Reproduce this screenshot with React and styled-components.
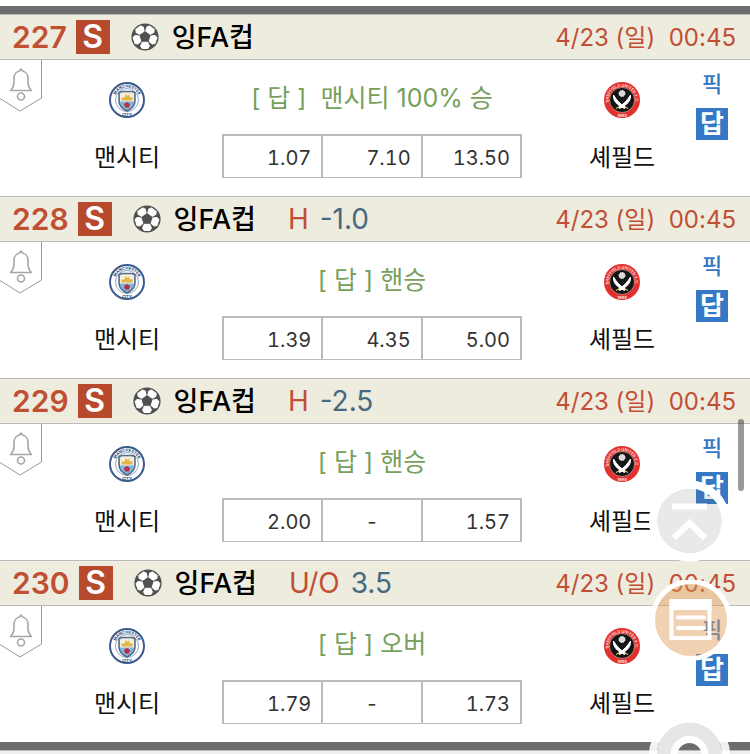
import React, { useId } from "react";
import styled, { createGlobalStyle } from "styled-components";

const GlobalStyle = createGlobalStyle`
    * {
        box-sizing: border-box;
    }
    body {
        margin: 0;
        background-color: #eeeeee;
        font-family: Inter, "Noto Sans CJK KR", sans-serif;
        color: #111111;
    }
`;

const Page = styled.main`
    padding-top: 6px;
    background-color: white;
`;

const List = styled.section`
    border-top: 8px solid #6d6d6d;
    border-bottom: 8px solid #6d6d6d;
`;

const Footer = styled.footer`
    height: 4px;
    border-top: 1px solid #bbbbbb;
    background-color: #eeeeee;
`;

const GameHeader = styled.header`
    display: flex;
    align-items: center;
    height: 46px;
    padding: 0 14px 0 12px;
    border-top: 1px solid #bbbbbb;
    border-bottom: 1px solid #bbbbbb;
    background-color: #eeecdf;
    white-space: nowrap;
`;

const GameNumber = styled.span`
    font-size: 30px;
    font-weight: 600;
    color: #c14f33;
`;

const Badge = styled.span`
    width: 34px;
    height: 34px;
    margin-left: 9px;
    background-color: #b7492c;
    color: white;
    font-size: 32px;
    font-weight: 600;
    line-height: 34px;
    text-align: center;
`;

const Ball = styled.svg`
    width: 28px;
    height: 28px;
    margin-left: 21px;
`;

const League = styled.h2`
    margin: 0 0 0 13px;
    padding-top: 2px;
    font-size: 27px;
    font-weight: 500;
    line-height: 40px;
    color: black;
`;

const Handicap = styled.span`
    display: flex;
    gap: 11px;
    margin-left: 32px;
    font-size: 28px;
    color: #47697f;
`;

const Kind = styled.span`
    color: #c14f33;
`;

const When = styled.time`
    margin-left: auto;
    padding-top: 2px;
    font-size: 24px;
    line-height: 40px;
    color: #c14f33;
    white-space: pre;
`;

const GameBody = styled.div`
    display: grid;
    grid-template-columns: 62px 130px 1fr 140px 58px;
    min-height: 136px;
`;

const AlarmButton = styled.button`
    width: 43px;
    height: 53px;
    padding: 0;
    border: none;
    background: none;
    cursor: pointer;
`;

const Team = styled.div`
    display: flex;
    flex-direction: column;
    align-items: center;
    gap: 22px;
    padding-top: 22px;
`;

const TeamName = styled.span`
    font-size: 24px;
    line-height: 36px;
`;

const Middle = styled.div`
    display: flex;
    flex-direction: column;
    align-items: center;
    gap: 18px;
    padding-top: 20px;
`;

const Answer = styled.p`
    margin: 0;
    font-size: 25px;
    line-height: 36px;
    color: #76a05c;
    white-space: pre;
`;

const Odds = styled.table`
    width: 300px;
    height: 44px;
    border-collapse: collapse;
    table-layout: fixed;
`;

const Odd = styled.td`
    padding: 2px 10px 0;
    border: 2px solid #bbbbbb;
    border-bottom-width: 1px;
    font-size: 20px;
    font-variant-numeric: tabular-nums;
    color: #333333;
    text-align: ${props => props.$empty ? "center" : "right"};
`;

const Picks = styled.div`
    display: flex;
    flex-direction: column;
    align-items: center;
    gap: 12px;
    width: 40px;
    padding-top: 12px;
`;

const PickButton = styled.button`
    padding: 0;
    border: none;
    background: none;
    font-family: inherit;
    font-size: 22px;
    font-weight: 500;
    line-height: 24px;
    color: #3478c6;
    cursor: pointer;
`;

const AnswerButton = styled(PickButton)`
    width: 32px;
    height: 32px;
    background-color: #3478c6;
    color: white;
    font-size: 26px;
    font-weight: 700;
    line-height: 32px;
`;

const FloatMenu = styled.nav`
    position: fixed;
    top: 480px;
    right: 18px;
    display: flex;
    flex-direction: column;
    gap: 16px;
`;

const FloatButton = styled.button`
    width: 84px;
    height: 84px;
    margin-top: ${props => props.$apart ? "34px" : "0"};
    padding: 0;
    border: none;
    background: none;
    cursor: pointer;
`;

const ScrollThumb = styled.div`
    position: fixed;
    top: 419px;
    right: 6px;
    width: 6px;
    height: 72px;
    border-radius: 3px;
    background-color: rgba(0, 0, 0, 0.4);
`;

const games = [
    { id: 227, answer: "[ 답 ]  맨시티 100% 승", odds: ["1.07", "7.10", "13.50"] },
    { id: 228, kind: "H", value: "-1.0", answer: "[ 답 ] 핸승", odds: ["1.39", "4.35", "5.00"] },
    { id: 229, kind: "H", value: "-2.5", answer: "[ 답 ] 핸승", odds: ["2.00", "-", "1.57"] },
    { id: 230, kind: "U/O", value: "3.5", answer: "[ 답 ] 오버", odds: ["1.79", "-", "1.73"] },
];

const SoccerBall = () => (
    <Ball viewBox="0 0 28 28" aria-hidden="true">
        <circle cx="14" cy="14" r="13.6" fill="#505050" />
        <g fill="white" stroke="white" strokeLinejoin="round">
            {[0, 72, 144, 216, 288].map(angle => (
                <path key={angle} d="M11.2 19.3H16.8L18.4 23 17 25.5H11L9.6 23Z" transform={`rotate(${angle} 14 14)`} />
            ))}
        </g>
    </Ball>
);

const Bell = () => (
    <svg width="43" height="53" viewBox="0 0 43 53" fill="none" aria-hidden="true">
        <path d="M41.5 0V38L20 51 0 38.5" stroke="#999999" />
        <path d="M10.5 30.5C13 28 14 26 14 22V18.5C14 14.5 16.5 11.5 19.5 11L21 9 22.5 11C25.5 11.5 28 14.5 28 18.5V22C28 26 29 28 31.5 30.5Z" stroke="#a6a6a6" strokeWidth="1.6" strokeLinejoin="round" />
        <circle cx="21" cy="36.5" r="3.5" stroke="#a6a6a6" strokeWidth="1.6" />
    </svg>
);

const CityCrest = () => {
    const id = useId();
    return (
        <svg width="36" height="36" viewBox="0 0 36 36" aria-hidden="true">
            <circle cx="18" cy="18" r="17" fill="white" stroke="#3d5a8f" strokeWidth="2" />
            <path id={id} d="M7.8 25A12.4 12.4 0 1 1 28.2 25" fill="none" />
            <text fontSize="4" fontWeight="700" fill="#26406f" textAnchor="middle">
                <textPath href={`#${id}`} startOffset="50%">MANCHESTER</textPath>
            </text>
            <text x="18" y="33.5" fontSize="4" fontWeight="700" fill="#26406f" textAnchor="middle">CITY</text>
            <circle cx="18" cy="18" r="11.5" fill="white" stroke="#8aa9cf" />
            <path d="M10 10.5 13 9.5H23L26 10.5V19C26 24 22.5 27 18 29 13.5 27 10 24 10 19Z" fill="#7fb4df" stroke="#5d6a80" strokeWidth="1.5" />
            <path d="M11 11.5 13 10.5H23L25 11.5V19.5H11Z" fill="#f6efd8" />
            <path d="M12.5 18.5 12.5 15.5 15.5 15.5 17 12 18.5 14 20.5 12.5 20.5 15.5 23.5 15 23.5 18.5Z" fill="#e3b548" />
            <path d="M18 20 21 22 19.8 25.5H16.2L15 22Z" fill="#b82e3d" />
        </svg>
    );
};

const SheffieldCrest = () => {
    const id = useId();
    return (
        <svg width="36" height="36" viewBox="0 0 36 36" aria-hidden="true">
            <circle cx="18" cy="18" r="18" fill="#e0302f" />
            <path id={id} d="M5.5 23A13.4 13.4 0 1 1 30.5 23" fill="none" />
            <text fontSize="4" fontWeight="700" fill="#ffd9d4" textAnchor="middle">
                <textPath href={`#${id}`} startOffset="50%">SHEFFIELD UNITED F.C.</textPath>
            </text>
            <circle cx="18" cy="18" r="12.5" fill="#151515" stroke="#f2b5b0" strokeWidth="0.6" />
            <circle cx="18" cy="11.5" r="3" fill="#d9d9d9" stroke="white" strokeDasharray="1.5 0.8" />
            <path d="M9.5 13C9 19 13 23 20.5 26.5L21.5 25C16 22 12.5 18 9.5 13Z" fill="white" stroke="white" />
            <path d="M26.5 13C27 19 23 23 15.5 26.5L14.5 25C20 22 23.5 18 26.5 13Z" fill="white" stroke="white" />
            <path d="M12 26.5 15 25M24 26.5 21 25" stroke="#d5c04a" strokeWidth="1.3" />
            <text x="18" y="34.5" fontSize="4" fontWeight="700" fill="#ffe5e2" textAnchor="middle">1889</text>
        </svg>
    );
};

const Game = ({ game }) => (
    <article>
        <GameHeader>
            <GameNumber>{game.id}</GameNumber>
            <Badge>S</Badge>
            <SoccerBall />
            <League>잉FA컵</League>
            {game.kind &&
                <Handicap>
                    <Kind>{game.kind}</Kind>
                    <span>{game.value}</span>
                </Handicap>
            }
            <When>{"4/23 (일)  00:45"}</When>
        </GameHeader>
        <GameBody>
            <AlarmButton aria-label="알림"><Bell /></AlarmButton>
            <Team>
                <CityCrest />
                <TeamName>맨시티</TeamName>
            </Team>
            <Middle>
                <Answer>{game.answer}</Answer>
                <Odds>
                    <tbody>
                        <tr>
                            {game.odds.map((odd, i) => (
                                <Odd key={i} $empty={odd === "-"}>{odd}</Odd>
                            ))}
                        </tr>
                    </tbody>
                </Odds>
            </Middle>
            <Team>
                <SheffieldCrest />
                <TeamName>셰필드</TeamName>
            </Team>
            <Picks>
                <PickButton>픽</PickButton>
                <AnswerButton>답</AnswerButton>
            </Picks>
        </GameBody>
    </article>
);

const App = () => (
    <>
        <GlobalStyle />
        <Page>
            <List>
                {games.map(game => <Game key={game.id} game={game} />)}
            </List>
            <Footer />
        </Page>
        <ScrollThumb />
        <FloatMenu>
            <FloatButton aria-label="맨 위로">
                <svg width="84" height="84" viewBox="0 0 84 84" fill="none">
                    <circle cx="41.5" cy="41" r="32.5" fill="rgba(110, 110, 110, 0.15)" />
                    <circle cx="41.5" cy="41" r="36.5" stroke="white" strokeWidth="8" />
                    <path d="M24 26.5H59M26 58 41.5 43 57 58" stroke="white" strokeWidth="6" />
                </svg>
            </FloatButton>
            <FloatButton aria-label="목록">
                <svg width="84" height="84" viewBox="0 0 84 84" fill="none">
                    <circle cx="43" cy="40" r="36.5" fill="rgba(222, 152, 84, 0.45)" />
                    <circle cx="43" cy="40" r="38.5" stroke="white" strokeWidth="5" />
                    <path d="M23.5 22H61.5V58H23.5Z" stroke="white" strokeWidth="4" />
                    <path d="M21.5 24.5H63.5" stroke="white" strokeWidth="11" />
                    <path d="M30 37.5H56M30 48H56" stroke="white" strokeWidth="4" strokeLinecap="round" />
                </svg>
            </FloatButton>
            <FloatButton $apart aria-label="새로고침">
                <svg width="84" height="84" viewBox="0 0 84 84" fill="none">
                    <circle cx="41.5" cy="41" r="36.5" stroke="white" strokeOpacity="0.9" strokeWidth="8" />
                    <circle cx="41.5" cy="41" r="25.5" stroke="#e6e6e6" strokeWidth="14" />
                    <circle cx="41.5" cy="41" r="15.5" stroke="white" strokeWidth="7" />
                </svg>
            </FloatButton>
        </FloatMenu>
    </>
);

export default App;
